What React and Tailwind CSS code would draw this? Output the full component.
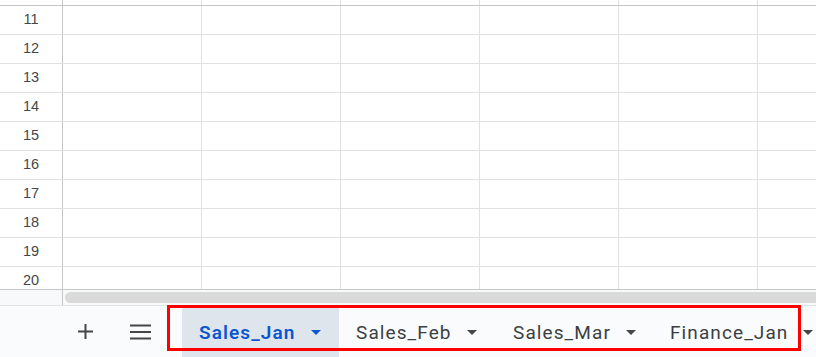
import React from "react"

const rows = [11, 12, 13, 14, 15, 16, 17, 18, 19, 20]
const cols = [0, 1, 2, 3, 4, 5]

const tabs = [
  { name: "Sales_Jan", active: true },
  { name: "Sales_Feb" },
  { name: "Sales_Mar" },
  { name: "Finance_Jan" },
]

function GridRow({ label, h = "h-[29px]" }) {
  return (
    <div className={`flex ${h} shrink-0 border-b border-[#e1e1e1]`}>
      <div className="flex w-[63px] shrink-0 items-center justify-center border-r border-[#c4c7c5] text-[14.5px] text-[#444746]">
        {label}
      </div>
      {cols.map((c) => (
        <div key={c} className="w-[139px] shrink-0 border-r border-[#e1e1e1]" />
      ))}
    </div>
  )
}

function Caret({ active }) {
  return (
    <svg width="10" height="5" viewBox="0 0 10 5" className="shrink-0">
      <path d="M0 0h10L5 5z" fill={active ? "#0b57d0" : "#444746"} />
    </svg>
  )
}

export default function App() {
  return (
    <div
      className="relative h-[357px] w-[816px] overflow-hidden bg-white"
      style={{ fontFamily: "Roboto, 'Liberation Sans', sans-serif" }}
    >
      {/* grid */}
      <div className="flex h-[289px] flex-col overflow-hidden" style={{ fontFamily: "'Liberation Sans', Arial, sans-serif" }}>
        <div className="flex h-[6px] shrink-0 border-b border-[#c4c7c5]">
          <div className="w-[63px] shrink-0 border-r border-[#c4c7c5]" />
          {cols.map((c) => (
            <div key={c} className="w-[139px] shrink-0 border-r border-[#e1e1e1]" />
          ))}
        </div>
        {rows.map((r) => (
          <GridRow key={r} label={r} />
        ))}
      </div>

      {/* horizontal scrollbar */}
      <div className="flex h-[16px] border-t border-[#c4c7c5] bg-[#f8f9fa]">
        <div className="w-[63px] shrink-0 border-r border-[#c4c7c5]" />
        <div className="flex flex-1 items-center pl-[2px]">
          <div className="h-[11px] w-full rounded-l-full bg-[#dadada]" />
        </div>
      </div>

      {/* sheet tabs bar */}
      <div className="flex h-[52px] items-stretch border-t border-[#e3e3e3] bg-[#f9fbfd]">
        <div className="flex w-[182px] shrink-0 items-center">
          <div className="ml-[77px] flex h-[16px] w-[16px] items-center justify-center">
            <svg width="15" height="15" viewBox="0 0 15 15">
              <path d="M7.5 0v15M0 7.5h15" stroke="#444746" strokeWidth="2" />
            </svg>
          </div>
          <div className="ml-[37px] flex items-center">
            <svg width="21" height="16" viewBox="0 0 21 16">
              <path d="M0 1.5h21M0 8h21M0 14.5h21" stroke="#444746" strokeWidth="2.2" />
            </svg>
          </div>
        </div>
        <div className="flex pt-[2px]">
          {tabs.map((t) => (
            <div
              key={t.name}
              className={`flex w-[157px] shrink-0 items-center gap-[15px] pl-[17px] text-[19px] tracking-[1.1px] ${
                t.active ? "bg-[#dfe5ed] font-semibold text-[#0b57d0]" : "font-normal text-[#3c4043]"
              }`}
            >
              <span className="leading-none">{t.name}</span>
              <Caret active={t.active} />
            </div>
          ))}
        </div>
      </div>

      {/* red highlight */}
      <div className="pointer-events-none absolute left-[167px] top-[305px] h-[46px] w-[634px] border-[3px] border-[#ff0000]" />
    </div>
  )
}
